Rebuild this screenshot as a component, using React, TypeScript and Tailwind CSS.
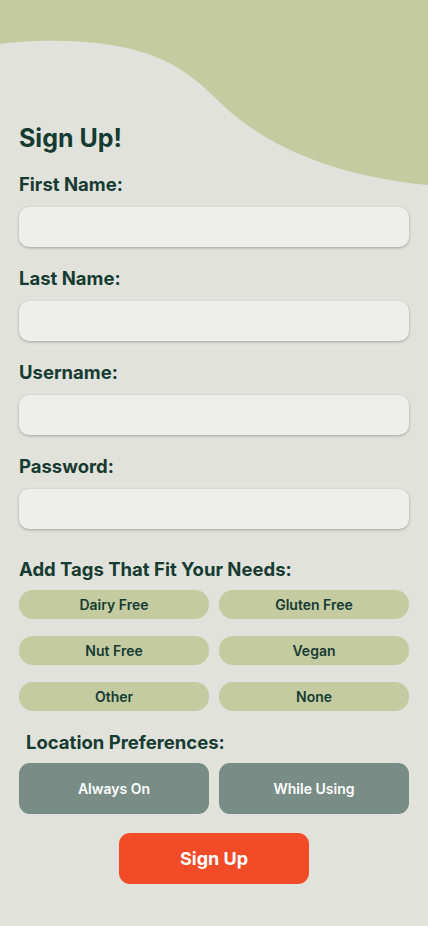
const font = { fontFamily: "Inter, 'Liberation Sans', sans-serif" };

const fields = ["First Name:", "Last Name:", "Username:", "Password:"];
const tags = ["Dairy Free", "Gluten Free", "Nut Free", "Vegan", "Other", "None"];

export default function App() {
  return (
    <div
      className="relative min-h-[926px] w-full overflow-hidden bg-[#e2e2dc] text-[#163b31]"
      style={font}
    >
      <svg
        className="absolute left-0 top-0"
        width="428"
        height="190"
        viewBox="0 0 428 190"
      >
        <path
          d="M0 44 C 30 40, 95 37, 145 53 C 185 66, 205 88, 228 110 C 265 142, 325 175, 428 185 V0 H0 Z"
          fill="#c5cba1"
        />
      </svg>

      <div className="relative px-[19px] pt-[123px]">
        <h1 className="h-[30px] text-[25px] font-bold leading-[30px]">Sign Up!</h1>

        {fields.map((f) => (
          <div key={f}>
            <div className="mt-[19px] mb-[11px] h-6 text-[18.5px] font-bold leading-6">{f}</div>
            <input
              type={f === "Password:" ? "password" : "text"}
              className="block h-10 w-full rounded-[10px] bg-[#eeeeec] shadow-[0_1px_3px_rgba(0,0,0,0.28)] outline-none"
            />
          </div>
        ))}

        <div className="mt-7 mb-[9px] h-6 text-[18.5px] font-bold leading-6">
          Add Tags That Fit Your Needs:
        </div>
        <div className="grid grid-cols-2 gap-x-[10px] gap-y-[17px]">
          {tags.map((t) => (
            <button
              key={t}
              className="h-[29px] rounded-[14px] bg-[#c5cba1] text-[14px] font-semibold text-[#163b31]"
            >
              {t}
            </button>
          ))}
        </div>

        <div className="mt-[19px] mb-[9px] h-6 pl-[7px] text-[18.5px] font-bold leading-6">
          Location Preferences:
        </div>
        <div className="grid grid-cols-2 gap-x-[10px]">
          <button className="h-[51px] rounded-[11px] bg-[#798d87] text-[14px] font-semibold text-white">
            Always On
          </button>
          <button className="h-[51px] rounded-[11px] bg-[#798d87] text-[14px] font-semibold text-white">
            While Using
          </button>
        </div>

        <div className="mt-[19px] flex justify-center">
          <button className="h-[51px] w-[190px] rounded-[11px] bg-[#f24b27] text-[18px] font-bold text-white">
            Sign Up
          </button>
        </div>
      </div>
    </div>
  );
}
